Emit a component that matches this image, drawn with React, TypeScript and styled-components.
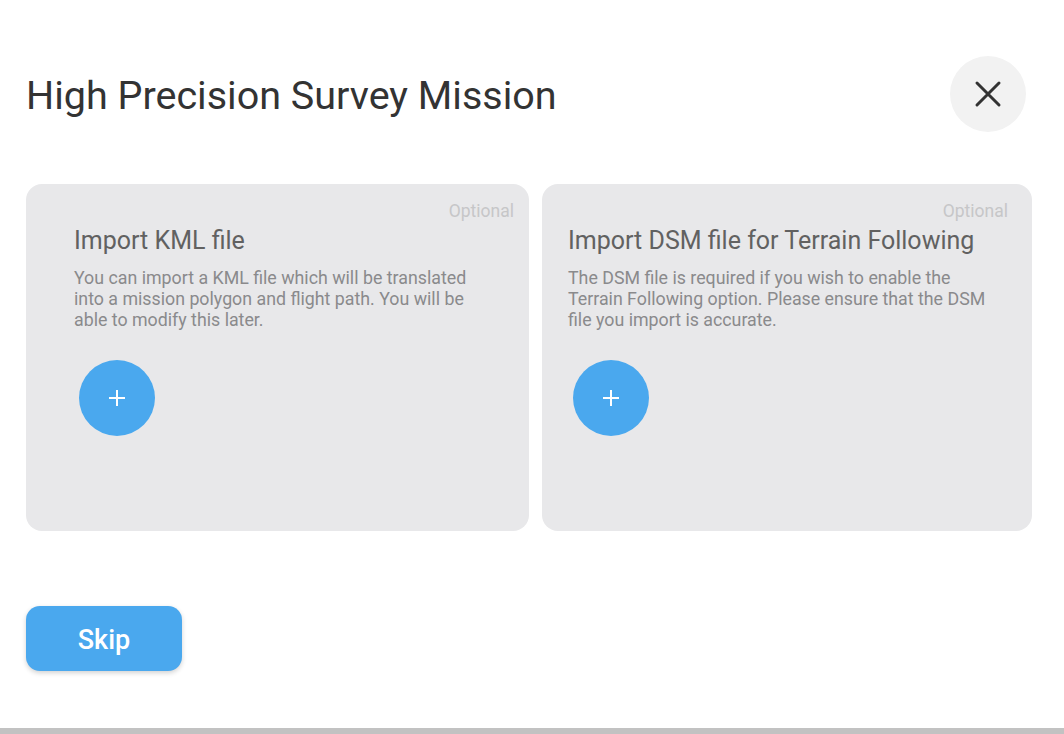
import * as React from 'react'
import styled, { createGlobalStyle } from 'styled-components'

const GlobalStyle = createGlobalStyle`
  html, body {
    margin: 0;
    padding: 0;
    background: #ffffff;
    font-family: Roboto, 'Liberation Sans', sans-serif;
  }
`

const Page = styled.div`
  width: 1064px;
  height: 734px;
  display: flex;
  flex-direction: column;
  box-sizing: border-box;
  overflow: hidden;
`

const Content = styled.div`
  flex: 1;
  display: flex;
  flex-direction: column;
  padding: 56px 32px 0 26px;
`

const Header = styled.div`
  display: flex;
  align-items: center;
  justify-content: space-between;
  padding-right: 6px;
`

const Title = styled.h1`
  margin: 0;
  padding-top: 2px;
  font-size: 39.5px;
  font-weight: 400;
  color: #333333;
`

const CloseButton = styled.button`
  width: 76px;
  height: 76px;
  border-radius: 50%;
  border: none;
  background: #f2f2f2;
  display: flex;
  align-items: center;
  justify-content: center;
  padding: 0;
  cursor: pointer;
`

const CardRow = styled.div`
  display: grid;
  grid-template-columns: 503fr 490fr;
  gap: 13px;
  margin-top: 52px;
`

const Card = styled.div<{ $inset: number; $tagInset: number }>`
  height: 347px;
  box-sizing: border-box;
  background: #e8e8ea;
  border-radius: 16px;
  display: flex;
  flex-direction: column;
  padding: 17px ${p => p.$tagInset}px 0 ${p => p.$inset}px;
`

const Tag = styled.div`
  align-self: flex-end;
  font-size: 17.5px;
  line-height: 20px;
  color: #c6c6c8;
`

const CardTitle = styled.h2`
  margin: 6px 0 0;
  font-size: 25px;
  line-height: 28px;
  font-weight: 400;
  color: #616161;
`

const CardText = styled.p`
  margin: 12px 0 0;
  font-size: 17.8px;
  line-height: 21px;
  color: #8a8a8c;
  max-width: 421px;
`

const AddButton = styled.button`
  margin: 30px 0 0 5px;
  width: 76px;
  height: 76px;
  border-radius: 50%;
  border: none;
  padding: 0;
  background: #4aa8ee;
  display: flex;
  align-items: center;
  justify-content: center;
  cursor: pointer;
`

const Footer = styled.div`
  margin-top: 75px;
`

const SkipButton = styled.button`
  width: 156px;
  height: 65px;
  border: none;
  border-radius: 14px;
  background: #4aa8ee;
  color: #ffffff;
  font-family: Roboto, 'Liberation Sans', sans-serif;
  font-size: 27px;
  font-weight: 500;
  padding-top: 3px;
  box-shadow: 0 2px 5px rgba(0, 0, 0, 0.18);
  cursor: pointer;
`

const BottomBar = styled.div`
  height: 6px;
  background: #c2c2c2;
`

const CloseIcon = () => (
  <svg width="28" height="28" viewBox="0 0 28 28">
    <path d="M3 3 L25 25 M25 3 L3 25" stroke="#333" strokeWidth="3" strokeLinecap="round" />
  </svg>
)

const PlusIcon = () => (
  <svg width="18" height="18" viewBox="0 0 18 18">
    <path d="M9 1 V17 M1 9 H17" stroke="#fff" strokeWidth="2" />
  </svg>
)

type ImportCardProps = {
  title: string
  text: string
  inset: number
  tagInset: number
}

function ImportCard(props: ImportCardProps) {
  return (
    <Card $inset={props.inset} $tagInset={props.tagInset}>
      <Tag>Optional</Tag>
      <CardTitle>{props.title}</CardTitle>
      <CardText>{props.text}</CardText>
      <AddButton aria-label="Add">
        <PlusIcon />
      </AddButton>
    </Card>
  )
}

export default function App() {
  return (
    <Page>
      <GlobalStyle />
      <Content>
        <Header>
          <Title>High Precision Survey Mission</Title>
          <CloseButton aria-label="Close">
            <CloseIcon />
          </CloseButton>
        </Header>
        <CardRow>
          <ImportCard
            title="Import KML file"
            text="You can import a KML file which will be translated into a mission polygon and flight path. You will be able to modify this later."
            inset={48}
            tagInset={15}
          />
          <ImportCard
            title="Import DSM file for Terrain Following"
            text="The DSM file is required if you wish to enable the Terrain Following option. Please ensure that the DSM file you import is accurate."
            inset={26}
            tagInset={24}
          />
        </CardRow>
        <Footer>
          <SkipButton>Skip</SkipButton>
        </Footer>
      </Content>
      <BottomBar />
    </Page>
  )
}
